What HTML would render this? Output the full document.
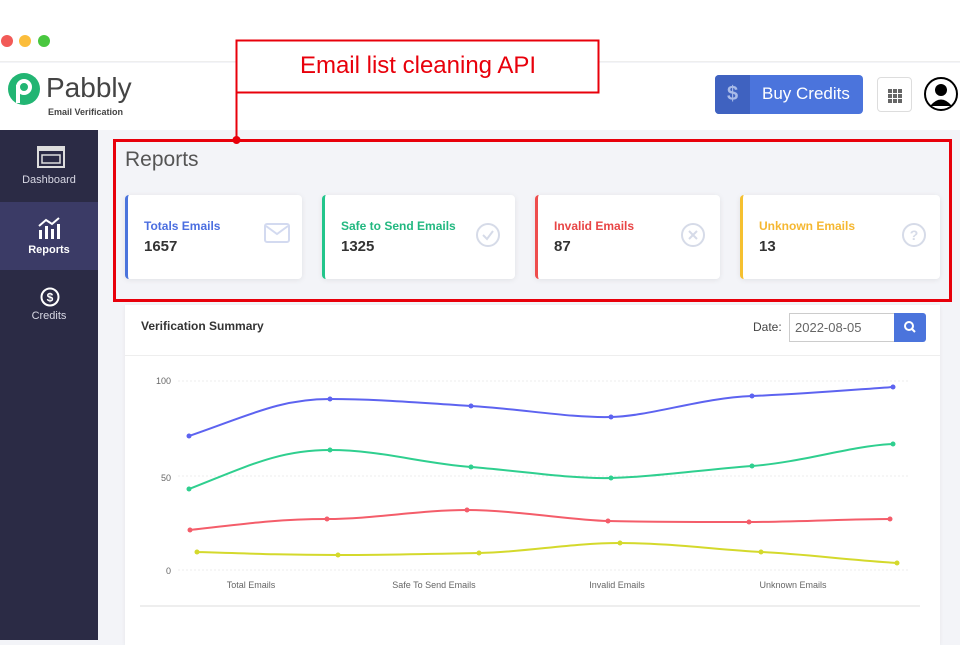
<!DOCTYPE html>
<html><head><meta charset="utf-8"><style>
*{margin:0;padding:0;box-sizing:border-box}
body{width:960px;height:640px;overflow:hidden;background:#f3f4f8;font-family:"Liberation Sans",sans-serif;position:relative}
.abs{position:absolute}
.card{position:absolute;top:195px;height:84px;background:#fff;border-radius:4px;box-shadow:0 1px 6px rgba(0,0,0,.08)}
.card .t{position:absolute;left:16px;top:24px;font-size:12px;font-weight:bold}
.card .n{position:absolute;left:16px;top:43px;font-size:15px;font-weight:bold;color:#333}
.card svg{position:absolute;top:28px}
.side{color:#d8d8e4;font-size:11px;text-align:center;width:98px;left:0}
</style></head><body>
<div class="abs" style="left:0;top:0;width:960px;height:62px;background:#fff;border-bottom:1px solid #eee"></div>
<div class="abs" style="left:1px;top:35px;width:12px;height:12px;border-radius:50%;background:#f25a57"></div>
<div class="abs" style="left:19px;top:35px;width:12px;height:12px;border-radius:50%;background:#fbbd3b"></div>
<div class="abs" style="left:38px;top:35px;width:12px;height:12px;border-radius:50%;background:#49c73f"></div>
<div class="abs" style="left:0;top:63px;width:960px;height:67px;background:#fff"></div>
<svg class="abs" style="left:6px;top:71px" width="36" height="36"><circle cx="18" cy="18" r="16" fill="#22b573"/><circle cx="18" cy="16" r="6" fill="none" stroke="#fff" stroke-width="4"/><rect x="10" y="14" width="4" height="18" fill="#fff"/></svg>
<div class="abs" style="left:46px;top:72px;font-size:28px;color:#444">Pabbly</div>
<div class="abs" style="left:48px;top:107px;font-size:9px;font-weight:bold;color:#444">Email Verification</div>
<div class="abs" style="left:715px;top:75px;width:148px;height:39px;background:#4b74dc;border-radius:4px;overflow:hidden"><div style="width:35px;height:39px;background:#3f62c0;color:#a9bbe8;font-size:20px;font-weight:bold;text-align:center;line-height:39px">$</div><div class="abs" style="left:47px;top:9px;color:#fff;font-size:17px">Buy Credits</div></div>
<div class="abs" style="left:877px;top:77px;width:35px;height:35px;border:1px solid #ddd;border-radius:4px;background:#fff"><svg width="35" height="35"><g fill="#666"><rect x="10" y="11" width="4" height="4"/><rect x="15" y="11" width="4" height="4"/><rect x="20" y="11" width="4" height="4"/><rect x="10" y="16" width="4" height="4"/><rect x="15" y="16" width="4" height="4"/><rect x="20" y="16" width="4" height="4"/><rect x="10" y="21" width="4" height="4"/><rect x="15" y="21" width="4" height="4"/><rect x="20" y="21" width="4" height="4"/></g></svg></div>
<svg class="abs" style="left:924px;top:77px" width="36" height="36"><circle cx="17" cy="17" r="16" fill="#fff" stroke="#000" stroke-width="2"/><circle cx="17" cy="13" r="6" fill="#000"/><path d="M6 29 Q17 16 28 29 Z" fill="#000"/></svg>
<div class="abs" style="left:0;top:130px;width:98px;height:510px;background:#2b2b45"></div>
<div class="abs" style="left:0;top:202px;width:98px;height:68px;background:#3b3b66"></div>
<svg class="abs" style="left:37px;top:146px" width="28" height="22"><rect x="1" y="1" width="26" height="20" fill="none" stroke="#ddd" stroke-width="2"/><rect x="1" y="1" width="26" height="4" fill="#ddd"/><rect x="5" y="9" width="18" height="8" fill="none" stroke="#ddd" stroke-width="1.5"/></svg>
<div class="abs side" style="top:174px">Dashboard</div>
<svg class="abs" style="left:38px;top:217px" width="22" height="22"><g fill="#fff"><rect x="1" y="13" width="3" height="9"/><rect x="7" y="9" width="3" height="13"/><rect x="13" y="12" width="3" height="10"/><rect x="19" y="7" width="3" height="15"/></g><path d="M1 9 L8 3 L14 7 L21 1" stroke="#fff" stroke-width="2" fill="none"/></svg>
<div class="abs side" style="top:244px;color:#fff;font-weight:bold">Reports</div>
<svg class="abs" style="left:40px;top:287px" width="20" height="20"><circle cx="10" cy="10" r="8.5" fill="none" stroke="#fff" stroke-width="2"/><text x="10" y="14.5" font-size="12" font-weight="bold" fill="#fff" text-anchor="middle" font-family="Liberation Sans">$</text></svg>
<div class="abs side" style="top:310px">Credits</div>
<div class="abs" style="left:125px;top:148px;font-size:21px;color:#555">Reports</div>
<div class="card" style="left:125px;width:177px;border-left:3px solid #4b74dc"><div class="t" style="color:#4b6ee0">Totals Emails</div><div class="n">1657</div><svg style="left:136px" width="26" height="20"><rect x="1" y="1" width="24" height="18" rx="2" fill="none" stroke="#d3daf0" stroke-width="2"/><path d="M2 3 L13 11 L24 3" fill="none" stroke="#d3daf0" stroke-width="2"/></svg></div>
<div class="card" style="left:322px;width:193px;border-left:3px solid #22c58b"><div class="t" style="color:#22b880">Safe to Send Emails</div><div class="n">1325</div><svg style="left:150px;top:27px" width="26" height="26"><circle cx="13" cy="13" r="11" fill="none" stroke="#d6dbe8" stroke-width="2"/><path d="M8 13 L12 17 L18 9" fill="none" stroke="#d6dbe8" stroke-width="2"/></svg></div>
<div class="card" style="left:535px;width:185px;border-left:3px solid #ee4d4d"><div class="t" style="color:#e84545">Invalid Emails</div><div class="n">87</div><svg style="left:142px;top:27px" width="26" height="26"><circle cx="13" cy="13" r="11" fill="none" stroke="#d6dbe8" stroke-width="2"/><path d="M9 9 L17 17 M17 9 L9 17" stroke="#d6dbe8" stroke-width="2"/></svg></div>
<div class="card" style="left:740px;width:200px;border-left:3px solid #f5c030"><div class="t" style="color:#f5b731">Unknown Emails</div><div class="n">13</div><svg style="left:158px;top:27px" width="26" height="26"><circle cx="13" cy="13" r="11" fill="none" stroke="#d6dbe8" stroke-width="2"/><text x="13" y="18" font-size="14" font-weight="bold" fill="#d6dbe8" text-anchor="middle" font-family="Liberation Sans">?</text></svg></div>
<div class="abs" style="left:125px;top:305px;width:815px;height:340px;background:#fff;box-shadow:0 1px 4px rgba(0,0,0,.06)"></div>
<div class="abs" style="left:125px;top:355px;width:815px;height:1px;background:#eee"></div>
<div class="abs" style="left:141px;top:319px;font-size:12px;font-weight:bold;color:#333">Verification Summary</div>
<div class="abs" style="left:753px;top:320px;font-size:12px;color:#444">Date:</div>
<div class="abs" style="left:789px;top:313px;width:106px;height:29px;border:1px solid #ccc;font-size:13px;color:#666;padding:6px 0 0 5px">2022-08-05</div>
<div class="abs" style="left:894px;top:313px;width:32px;height:29px;background:#4b74dc;border-radius:0 3px 3px 0"><svg width="32" height="29"><circle cx="15" cy="13" r="4" fill="none" stroke="#fff" stroke-width="2"/><path d="M18 16 L21 19" stroke="#fff" stroke-width="2"/></svg></div>
<svg class="abs" style="left:0;top:0" width="960" height="640" font-family="Liberation Sans">
<g stroke="#eee" stroke-dasharray="2 2"><line x1="178" y1="381" x2="910" y2="381"/><line x1="178" y1="476" x2="910" y2="476"/><line x1="178" y1="570" x2="910" y2="570"/></g>
<line x1="140" y1="606" x2="920" y2="606" stroke="#ddd"/>
<g font-size="9" fill="#666"><text x="171" y="384" text-anchor="end">100</text><text x="171" y="481" text-anchor="end">50</text><text x="171" y="574" text-anchor="end">0</text>
<text x="251" y="588" text-anchor="middle">Total Emails</text><text x="434" y="588" text-anchor="middle">Safe To Send Emails</text><text x="617" y="588" text-anchor="middle">Invalid Emails</text><text x="793" y="588" text-anchor="middle">Unknown Emails</text></g>
<g fill="none" stroke-width="2">
<path d="M189 436 C250 415,280 399,330 399 S420 403,471 406 S570 418,611 417 S700 398,752 396 S850 390,893 387" stroke="#5d63f0"/>
<path d="M189 489 C250 465,280 450,330 450 S420 463,471 467 S570 479,611 478 S700 470,752 466 S850 446,893 444" stroke="#2fcf8f"/>
<path d="M190 530 C250 523,280 519,327 519 S420 510,467 510 S570 520,608 521 S700 522,749 522 S850 519,890 519" stroke="#f45d6a"/>
<path d="M197 552 C260 554,290 555,338 555 S430 554,479 553 S570 543,620 543 S720 550,761 552 S850 560,897 563" stroke="#d4d92c"/>
</g>
<g fill="#5d63f0"><circle cx="189" cy="436" r="2.5"/><circle cx="330" cy="399" r="2.5"/><circle cx="471" cy="406" r="2.5"/><circle cx="611" cy="417" r="2.5"/><circle cx="752" cy="396" r="2.5"/><circle cx="893" cy="387" r="2.5"/></g>
<g fill="#2fcf8f"><circle cx="189" cy="489" r="2.5"/><circle cx="330" cy="450" r="2.5"/><circle cx="471" cy="467" r="2.5"/><circle cx="611" cy="478" r="2.5"/><circle cx="752" cy="466" r="2.5"/><circle cx="893" cy="444" r="2.5"/></g>
<g fill="#f45d6a"><circle cx="190" cy="530" r="2.5"/><circle cx="327" cy="519" r="2.5"/><circle cx="467" cy="510" r="2.5"/><circle cx="608" cy="521" r="2.5"/><circle cx="749" cy="522" r="2.5"/><circle cx="890" cy="519" r="2.5"/></g>
<g fill="#d4d92c"><circle cx="197" cy="552" r="2.5"/><circle cx="338" cy="555" r="2.5"/><circle cx="479" cy="553" r="2.5"/><circle cx="620" cy="543" r="2.5"/><circle cx="761" cy="552" r="2.5"/><circle cx="897" cy="563" r="2.5"/></g>
<rect x="114.5" y="140.5" width="836" height="160" fill="none" stroke="#e8000b" stroke-width="3"/>
<rect x="236.5" y="40.5" width="362" height="52" fill="#fff" stroke="#e8000b" stroke-width="2"/>
<line x1="236.5" y1="93" x2="236.5" y2="140" stroke="#e8000b" stroke-width="2"/>
<circle cx="236.5" cy="140" r="4" fill="#e8000b"/>
<text x="418" y="73" font-size="24" fill="#e8000b" text-anchor="middle">Email list cleaning API</text>
</svg>
</body></html>
